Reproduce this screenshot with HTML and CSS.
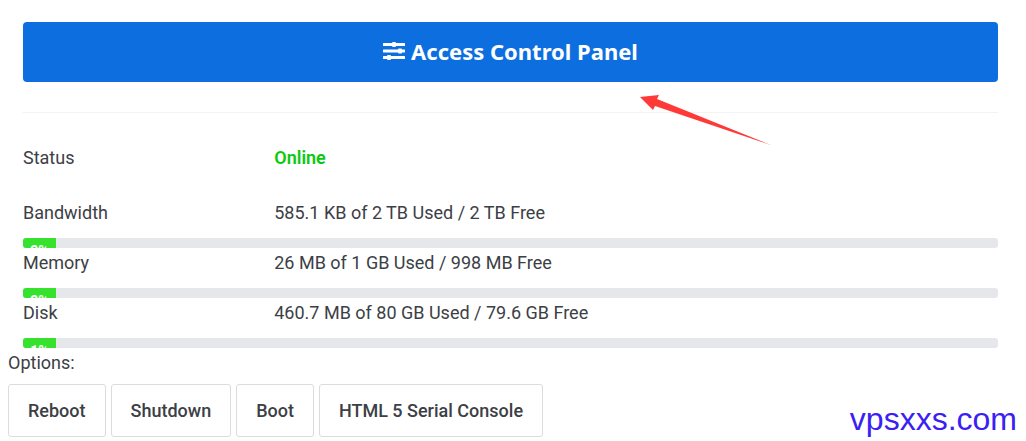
FILE: index.html
```html
<!DOCTYPE html>
<html lang="en">
<head>
    <meta charset="UTF-8">
    <meta name="viewport" content="width=device-width, initial-scale=1.0">
    <title>Control Panel</title>
    <link rel="stylesheet" href="styles.css">
</head>
<body>
    <div class="main">
        <div class="panel">
            <button class="access" type="button">
                <svg class="icon" viewBox="0 0 22 20" aria-hidden="true">
                    <rect x="0" y="2" width="22" height="3" rx=".5"/>
                    <rect x="9" y="1" width="4" height="5" rx="1"/>
                    <rect x="0" y="8.5" width="22" height="3" rx=".5"/>
                    <rect x="15" y="7.5" width="4" height="5" rx="1"/>
                    <rect x="0" y="15" width="22" height="3" rx=".5"/>
                    <rect x="4" y="14" width="4" height="5" rx="1"/>
                </svg>
                Access Control Panel
            </button>
            <hr>
            <div class="row status">
                <span>Status</span>
                <strong class="online">Online</strong>
            </div>
            <div class="row">
                <span>Bandwidth</span>
                <span>585.1 KB of 2 TB Used / 2 TB Free</span>
            </div>
            <div class="progress"><div class="bar">3%</div></div>
            <div class="row">
                <span>Memory</span>
                <span>26 MB of 1 GB Used / 998 MB Free</span>
            </div>
            <div class="progress"><div class="bar">3%</div></div>
            <div class="row">
                <span>Disk</span>
                <span>460.7 MB of 80 GB Used / 79.6 GB Free</span>
            </div>
            <div class="progress"><div class="bar">1%</div></div>
        </div>
        <p class="options">Options:</p>
        <div class="buttons">
            <button type="button">Reboot</button>
            <button type="button">Shutdown</button>
            <button type="button">Boot</button>
            <button type="button">HTML 5 Serial Console</button>
        </div>
    </div>

    <svg class="arrow" viewBox="0 0 134 52" aria-hidden="true">
        <path d="M0 2L19 0L17 4L132 50.500L15 11L13 15Z"/>
    </svg>
    <div class="watermark">vpsxxs.com</div>
</body>
</html>
```
FILE: styles.css
```css
*{
    box-sizing: border-box;
}
body{
    margin: 0;
    background: #fff;
    color: #3c4045;
    font-family: Roboto, "Liberation Sans", sans-serif;
    font-size: 18px;
    line-height: 30px;
}
.main{
    padding: 22px 13px 0 8px;
}
.panel{
    padding: 0 15px;
}
.access{
    display: flex;
    align-items: center;
    justify-content: center;
    gap: 6px;
    width: 100%;
    height: 60px;
    padding: 0 0 2px;
    border: none;
    border-radius: 4px;
    background: #0d6fdf;
    color: #fff;
    font-family: "Noto Sans", "Open Sans", sans-serif;
    font-size: 22px;
    font-weight: 700;
}
.icon{
    width: 22px;
    height: 20px;
    fill: #fff;
}
hr{
    margin: 30px 0;
    border: none;
    border-top: 1px solid #f3f3f4;
}
.row{
    display: grid;
    grid-template-columns: 1fr 3fr;
    column-gap: 10px;
    height: 40px;
}
.status{
    height: 55px;
}
.online{
    color: #0bc90f;
    font-weight: 600;
}
.progress{
    height: 10px;
    border-radius: 3px;
    background: #e6e7eb;
    overflow: hidden;
}
.bar{
    width: 33px;
    background: #36e22e;
    color: #fff;
    font-size: 14px;
    font-weight: 700;
    line-height: 26px;
    text-align: center;
}
.options{
    margin: 0 0 6px;
}
.buttons{
    display: flex;
    gap: 5px;
}
.buttons button{
    height: 53px;
    padding: 0 19px;
    border: 1px solid #dcdcdc;
    border-radius: 3px;
    background: #fff;
    color: #3c4045;
    font-family: inherit;
    font-size: 18px;
    font-weight: 500;
}
/* drawn over the page */
.arrow{
    position: absolute;
    top: 95px;
    left: 640px;
    width: 134px;
    height: 52px;
    fill: #ff3838;
}
.watermark{
    position: absolute;
    right: 9px;
    bottom: 4px;
    color: #3a20f5;
    font-family: "Liberation Sans", Arial, sans-serif;
    font-size: 32px;
    line-height: 36px;
}
```
